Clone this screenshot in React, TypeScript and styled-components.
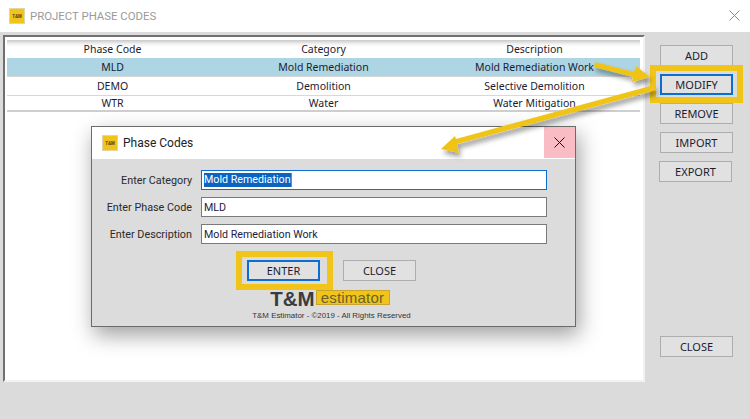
import React from "react";
import styled, { createGlobalStyle } from "styled-components";

const Global = createGlobalStyle`
  html, body { margin: 0; padding: 0; width: 750px; height: 419px; overflow: hidden; background: #dbdbdb; }
  body { font-family: Roboto, "Liberation Sans", Arial, sans-serif; color: #1a1a2a; }
`;

const Window = styled.div`
  position: relative;
  width: 750px;
  height: 419px;
  display: flex;
  flex-direction: column;
  background: #dbdbdb;
  overflow: hidden;
`;

const TitleBar = styled.header`
  height: 32px;
  flex: none;
  display: flex;
  align-items: center;
  background: #fff;
  padding: 0 9px;
  gap: 5px;
`;

const AppIcon = styled.span`
  width: 16px;
  height: 16px;
  flex: none;
  background: #f0c419;
  border: 1px solid #e0d6ae;
  box-sizing: border-box;
  display: flex;
  align-items: center;
  justify-content: center;
  font-family: "Liberation Sans", Arial, sans-serif;
  font-size: 4.5px;
  font-weight: 700;
  color: #4a4020;
  letter-spacing: -0.1px;
`;

const TitleText = styled.span`
  flex: 1;
  font-size: 11.4px;
  color: #9a9a9a;
`;

const CloseGlyph = styled.svg`
  width: 11px;
  height: 11px;
  flex: none;
  display: block;
`;

const WindowClose = styled.span`
  margin-right: 1px;
  margin-top: -2px;
  display: flex;
  color: #8a8a8a;
`;

const Body = styled.main`
  flex: 1;
  display: flex;
  align-items: flex-start;
  padding: 3px 0 0 3px;
`;

const ListBox = styled.section`
  width: 642px;
  height: 347px;
  box-sizing: border-box;
  background: #fff;
  border-style: solid;
  border-width: 2px;
  border-color: #707070 #f2f2f2 #f2f2f2 #707070;
  padding: 3px 3px 0 2px;
  flex: none;
`;

const Row = styled.div<{ $selected?: boolean; $header?: boolean; $last?: boolean }>`
  display: grid;
  grid-template-columns: repeat(3, 211px);
  height: ${(p) => (p.$last ? "16px" : p.$selected || p.$header ? "18px" : "19px")};
  box-sizing: border-box;
  align-items: center;
  text-align: center;
  font-family: "Noto Sans", Roboto, sans-serif;
  font-size: 10.5px;
  color: #1c1c30;
  background: ${(p) =>
    p.$selected
      ? "#add5e3"
      : p.$header
      ? "linear-gradient(#c9c9c9 0, #f2f2f2 4px, #fff 7px)"
      : "#fff"};
  border-bottom: ${(p) =>
    p.$selected || p.$header ? "none" : p.$last ? "2px solid #cfcfcf" : "1px solid #d8d8d8"};
  margin-bottom: ${(p) => (p.$selected ? "1px" : "0")};
  box-shadow: ${(p) => (p.$selected ? "0 1px 0 #d8d8d8" : "none")};
`;

const SideColumn = styled.aside`
  flex: 1;
  height: 312px;
  padding: 10px 0 0 15px;
  display: flex;
  flex-direction: column;
  gap: 8px;
`;

const Button = styled.button<{ $focused?: boolean; $ring?: string; $nudge?: boolean }>`
  position: relative;
  width: 73px;
  height: 21px;
  flex: none;
  padding: 0;
  box-sizing: border-box;
  background: #e1e1e1;
  border: ${(p) => (p.$focused ? "2px solid #0a6fd0" : "1px solid #adadad")};
  font-family: "Noto Sans", Roboto, sans-serif;
  font-size: 11px;
  color: #1c1c30;
  margin-left: ${(p) => (p.$nudge ? "-1px" : "0")};
  ${(p) =>
    p.$ring
      ? `&::after {
          content: "";
          position: absolute;
          inset: ${p.$ring};
          border: 6px solid #f0c419;
        }`
      : ""}
`;

const Spacer = styled.div`
  flex: 1;
`;

const Dialog = styled.section`
  position: absolute;
  left: 91px;
  top: 126px;
  width: 485px;
  height: 201px;
  box-sizing: border-box;
  border: 1px solid #6b6b6b;
  background: #dcdcdc;
  box-shadow: 3px 8px 20px rgba(0, 0, 0, 0.38);
  display: flex;
  flex-direction: column;
`;

const DialogBar = styled.header`
  height: 32px;
  flex: none;
  background: #fff;
  display: flex;
  align-items: flex-start;
  padding-left: 10px;
  gap: 5px;
`;

const DialogBarIcon = styled(AppIcon)`
  margin-top: 8px;
`;

const DialogTitle = styled.span`
  flex: 1;
  font-size: 12px;
  line-height: 32px;
  color: #222;
`;

const DialogClose = styled.span`
  width: 31px;
  height: 31px;
  background: #f9bcc5;
  display: flex;
  align-items: center;
  justify-content: center;
  color: #111;
`;

const Form = styled.div`
  flex: none;
  display: flex;
  flex-direction: column;
  padding: 11px 28px 0 0;
  gap: 7px;
`;

const Field = styled.div`
  display: grid;
  grid-template-columns: 100px 346px;
  column-gap: 9px;
  align-items: center;
  justify-content: end;
  height: 20px;
`;

const Label = styled.span`
  text-align: right;
  font-size: 10.8px;
  color: #2a2a2a;
  white-space: nowrap;
`;

const Input = styled.div<{ $focused?: boolean }>`
  height: 20px;
  box-sizing: border-box;
  background: #fff;
  border: 1px solid ${(p) => (p.$focused ? "#0a6fd0" : "#7a7a7a")};
  padding: 0 2px;
  display: flex;
  align-items: center;
  font-size: 10.7px;
  color: #1c1c40;
`;

const Selected = styled.span`
  background: #0a64c0;
  color: #fff;
  line-height: 14px;
  border-right: 1px solid #e07020;
`;

const DialogActions = styled.div`
  display: flex;
  justify-content: flex-start;
  gap: 23px;
  padding: 16px 0 0 155px;
`;

const Logo = styled.div`
  display: flex;
  justify-content: center;
  align-items: flex-start;
  height: 17px;
  margin-top: 9px;
  padding-right: 7px;
`;

const LogoMark = styled.span`
  font-family: "Liberation Sans", Arial, sans-serif;
  font-size: 20.5px;
  line-height: 17px;
  font-weight: 700;
  color: #3c3c3c;
  margin-right: 1px;
`;

const LogoBox = styled.span`
  width: 74px;
  box-sizing: border-box;
  height: 15px;
  background: #f0c419;
  border: 1px solid #c9a52b;
  font-family: "Liberation Sans", Arial, sans-serif;
  font-size: 15px;
  line-height: 13px;
  color: #6a6030;
  padding-left: 4px;
  letter-spacing: 0.2px;
`;

const Copyright = styled.div`
  text-align: center;
  font-family: "Liberation Sans", Arial, sans-serif;
  font-size: 7.9px;
  color: #333;
  margin-top: 4px;
  padding-right: 4px;
`;

const Arrows = styled.svg`
  position: absolute;
  left: 0;
  top: 0;
  pointer-events: none;
`;

const X = () => (
  <CloseGlyph viewBox="0 0 11 11">
    <path d="M.5.5l10 10M10.5.5l-10 10" stroke="currentColor" strokeWidth="1" fill="none" />
  </CloseGlyph>
);

const rows = [
  ["MLD", "Mold Remediation", "Mold Remediation Work"],
  ["DEMO", "Demolition", "Selective Demolition"],
  ["WTR", "Water", "Water Mitigation"],
];

export default function App() {
  return (
    <Window>
      <Global />
      <TitleBar>
        <AppIcon>T&amp;M</AppIcon>
        <TitleText>PROJECT PHASE CODES</TitleText>
        <WindowClose>
          <X />
        </WindowClose>
      </TitleBar>
      <Body>
        <ListBox>
          <Row $header>
            <span>Phase Code</span>
            <span>Category</span>
            <span>Description</span>
          </Row>
          {rows.map((r, i) => (
            <Row key={r[0]} $selected={i === 0} $last={i === 2}>
              {r.map((c) => (
                <span key={c}>{c}</span>
              ))}
            </Row>
          ))}
        </ListBox>
        <SideColumn>
          <Button>ADD</Button>
          <Button $focused $ring="-11px -12px -10px -12px">MODIFY</Button>
          <Button>REMOVE</Button>
          <Button>IMPORT</Button>
          <Button $nudge>EXPORT</Button>
          <Spacer />
          <Button>CLOSE</Button>
        </SideColumn>
      </Body>
      <Dialog>
        <DialogBar>
          <DialogBarIcon>T&amp;M</DialogBarIcon>
          <DialogTitle>Phase Codes</DialogTitle>
          <DialogClose>
            <X />
          </DialogClose>
        </DialogBar>
        <Form>
          <Field>
            <Label>Enter Category</Label>
            <Input $focused>
              <Selected>Mold Remediation</Selected>
            </Input>
          </Field>
          <Field>
            <Label>Enter Phase Code</Label>
            <Input>MLD</Input>
          </Field>
          <Field>
            <Label>Enter Description</Label>
            <Input>Mold Remediation Work</Input>
          </Field>
        </Form>
        <DialogActions>
          <Button $focused $ring="-11px -15px -11px -13px">ENTER</Button>
          <Button>CLOSE</Button>
        </DialogActions>
        <Logo>
          <LogoMark>T&amp;M</LogoMark>
          <LogoBox>estimator</LogoBox>
        </Logo>
        <Copyright>T&amp;M Estimator - ©2019 - All Rights Reserved</Copyright>
      </Dialog>
      <Arrows width="750" height="419" viewBox="0 0 750 419">
        <defs>
          <filter id="arrowShadow" x="-20%" y="-40%" width="140%" height="200%">
            <feDropShadow dx="2" dy="4" stdDeviation="2.5" floodColor="#000" floodOpacity="0.4" />
          </filter>
        </defs>
        <g fill="#f0c419" filter="url(#arrowShadow)">
          <polygon points="595,62 634,72 636,66 650,77 632,82 633,77 594,67" />
          <polygon points="654,85 656,90 457,144 459,153 441,149 455,136 456,139" />
        </g>
      </Arrows>
    </Window>
  );
}
